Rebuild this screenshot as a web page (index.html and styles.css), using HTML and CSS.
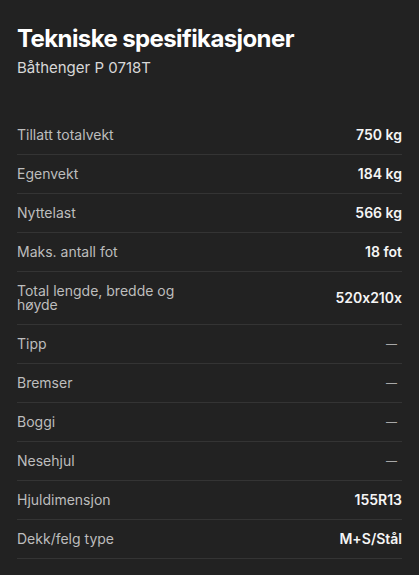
FILE: index.html
```html
<!DOCTYPE html>
<html lang="no">
<head>
  <meta charset="UTF-8">
  <meta name="viewport" content="width=device-width, initial-scale=1.0">
  <title>Tekniske spesifikasjoner</title>
  <link rel="stylesheet" href="styles.css">
</head>
<body>

  <div class="specs">
    <div class="specs-header">
      <h1>Tekniske spesifikasjoner</h1>
      <p class="subtitle">Båthenger P 0718T</p>
    </div>

    <ul class="spec-list">
      <li class="spec-row">
        <span class="spec-label">Tillatt totalvekt</span>
        <span class="spec-value">750 kg</span>
      </li>
      <li class="spec-row">
        <span class="spec-label">Egenvekt</span>
        <span class="spec-value">184 kg</span>
      </li>
      <li class="spec-row">
        <span class="spec-label">Nyttelast</span>
        <span class="spec-value">566 kg</span>
      </li>
      <li class="spec-row">
        <span class="spec-label">Maks. antall fot</span>
        <span class="spec-value">18 fot</span>
      </li>
      <li class="spec-row">
        <span class="spec-label">Total lengde, bredde og høyde</span>
        <span class="spec-value">520x210x</span>
      </li>
      <li class="spec-row">
        <span class="spec-label">Tipp</span>
        <span class="spec-value empty">—</span>
      </li>
      <li class="spec-row">
        <span class="spec-label">Bremser</span>
        <span class="spec-value empty">—</span>
      </li>
      <li class="spec-row">
        <span class="spec-label">Boggi</span>
        <span class="spec-value empty">—</span>
      </li>
      <li class="spec-row">
        <span class="spec-label">Nesehjul</span>
        <span class="spec-value empty">—</span>
      </li>
      <li class="spec-row">
        <span class="spec-label">Hjuldimensjon</span>
        <span class="spec-value">155R13</span>
      </li>
      <li class="spec-row">
        <span class="spec-label">Dekk/felg type</span>
        <span class="spec-value">M+S/Stål</span>
      </li>
    </ul>
  </div>

</body>
</html>
```

FILE: styles.css
```css
* {
  margin: 0;
  padding: 0;
  box-sizing: border-box;
}

body {
  background-color: #222222;
  color: #f2f2f2;
  font-family: Inter, "Noto Sans", sans-serif;
  font-feature-settings: "calt" 0;
}

.specs {
  padding: 24px 17px 0 17px;
}

.specs-header h1 {
  font-size: 24px;
  font-weight: 700;
  letter-spacing: -0.6px;
  line-height: 30px;
  color: #fff;
}

.subtitle {
  font-size: 15px;
  color: #d8d8d8;
  margin-top: 5px;
  line-height: 18px;
}

.spec-list {
  list-style: none;
  margin-top: 39px;
}

.spec-row {
  display: flex;
  justify-content: space-between;
  align-items: center;
  padding: 12px 0;
  border-bottom: 1px solid #343434;
  min-height: 39px;
}

.spec-label {
  max-width: 50%;
  font-size: 14px;
  line-height: 14px;
  color: #bdbdbd;
}

.spec-value {
  font-size: 14px;
  font-weight: 600;
  line-height: 14px;
  color: #f5f5f5;
}

.spec-value.empty {
  font-size: 11px;
  font-weight: 500;
  color: #a8a8a8;
  padding-right: 5px;
}
```
